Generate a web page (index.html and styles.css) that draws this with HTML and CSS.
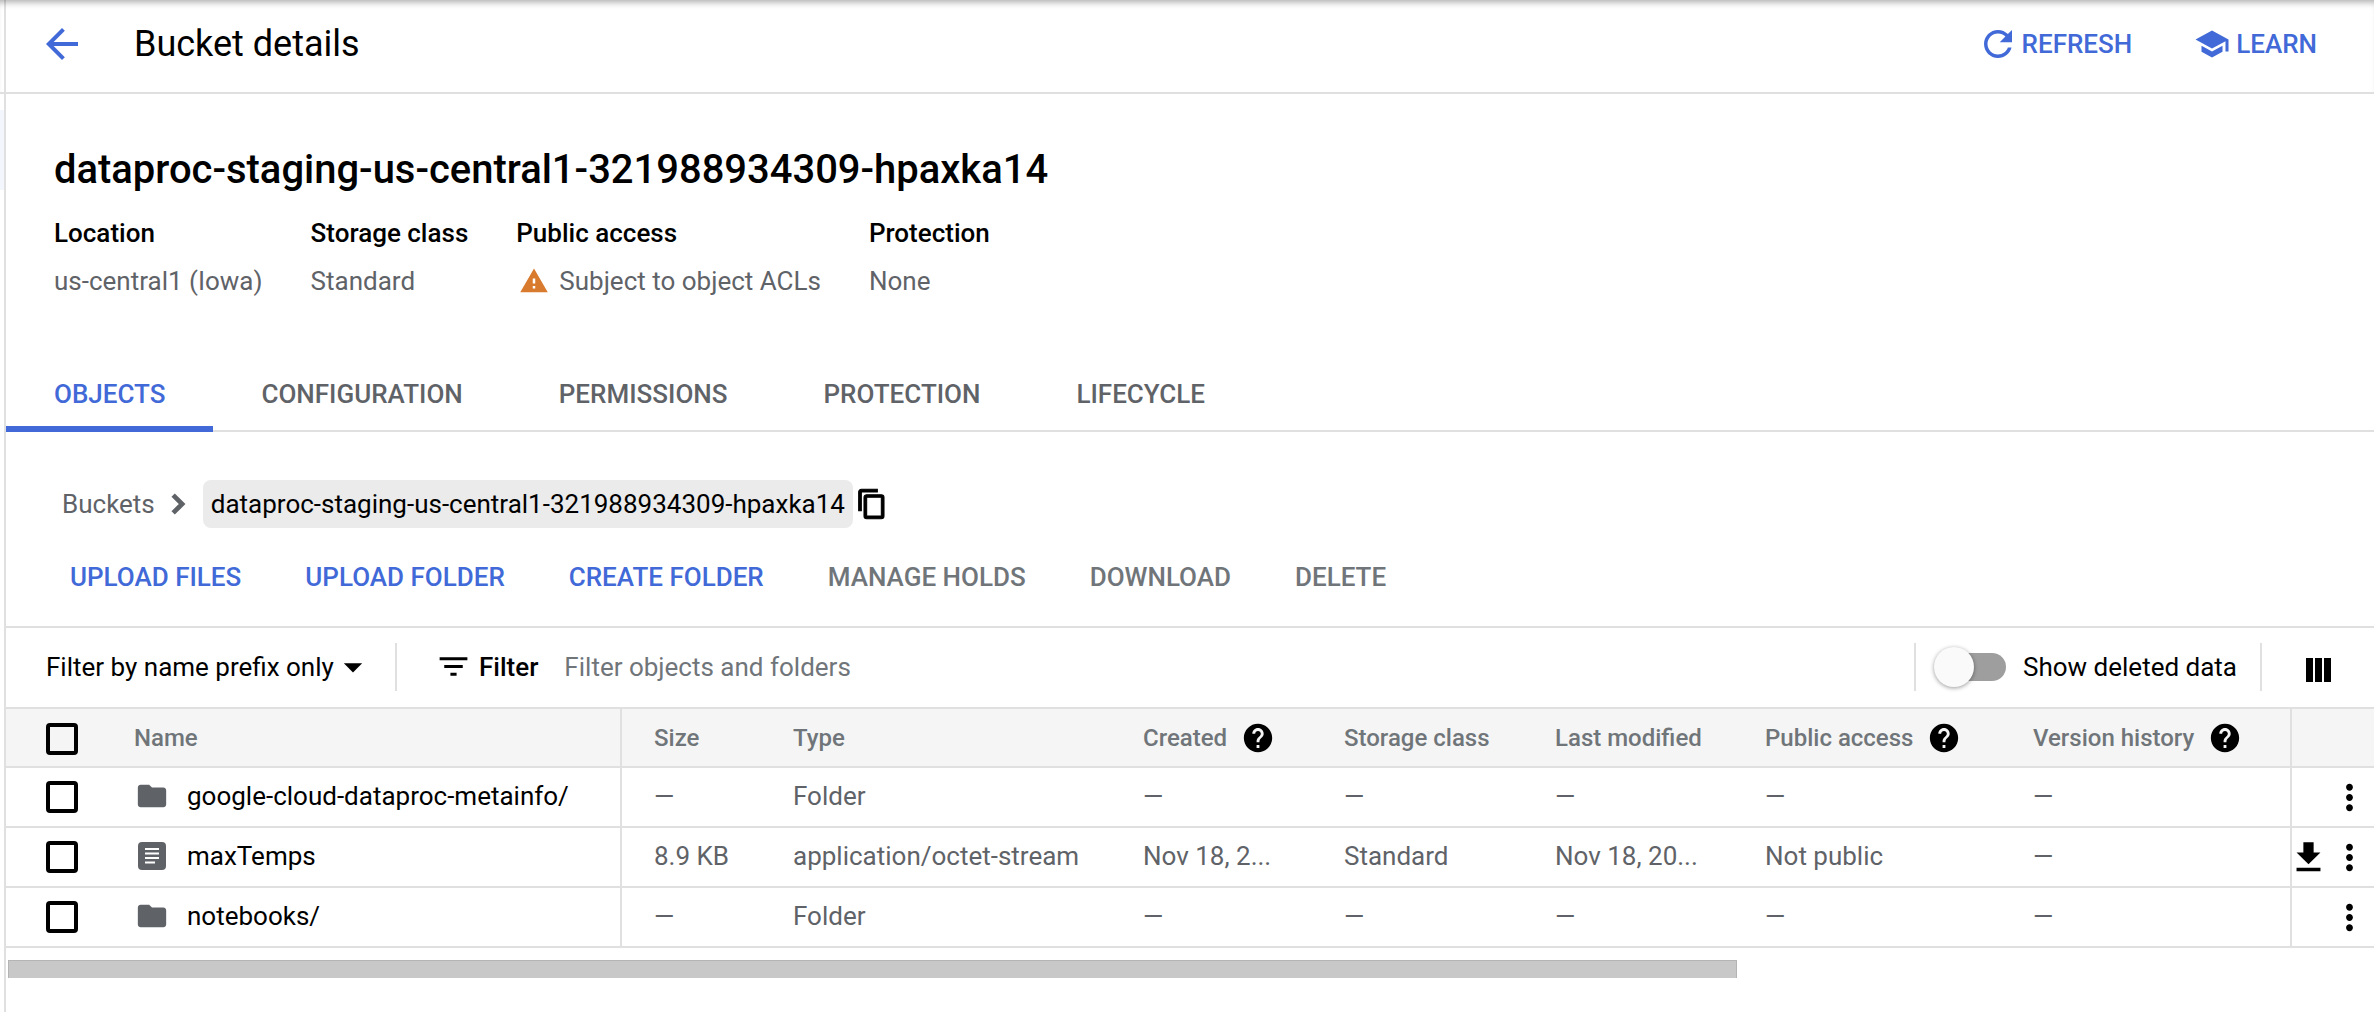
FILE: index.html
```html
<!DOCTYPE html>
<html lang="en">
<head>
<meta charset="utf-8">
<title>Bucket details</title>
<link rel="stylesheet" href="styles.css">
</head>
<body>
<div class="gutter-tint"></div>
<main class="app">
  <header class="topbar">
    <svg class="i back" viewBox="0 0 24 24"><path d="M20 11H7.83l5.59-5.59L12 4l-8 8 8 8 1.41-1.41L7.83 13H20v-2z"/></svg>
    <h2 class="page-title">Bucket details</h2>
    <a class="top-action refresh"><svg class="i" viewBox="0 0 24 24"><path d="M17.65 6.35C16.2 4.9 14.21 4 12 4c-4.42 0-7.99 3.58-7.99 8s3.57 8 7.99 8c3.73 0 6.84-2.55 7.73-6h-2.08c-.82 2.33-3.04 4-5.65 4-3.31 0-6-2.69-6-6s2.69-6 6-6c1.66 0 3.14.69 4.22 1.78L13 11h7V4l-2.35 2.35z"/></svg>REFRESH</a>
    <a class="top-action learn"><svg class="i" viewBox="0 0 24 24"><path d="M5 13.18v4L12 21l7-3.82v-4L12 17l-7-3.82zM12 3L1 9l11 6 9-4.91V17h2V9L12 3z"/></svg>LEARN</a>
  </header>

  <section class="summary">
    <h1 class="bucket-name">dataproc-staging-us-central1-321988934309-hpaxka14</h1>
    <div class="facts">
      <div class="fact"><div class="fact-label">Location</div><div class="fact-value">us-central1 (Iowa)</div></div>
      <div class="fact"><div class="fact-label">Storage class</div><div class="fact-value">Standard</div></div>
      <div class="fact"><div class="fact-label">Public access</div><div class="fact-value"><svg class="i warn" viewBox="0 0 24 24"><path d="M1 21h22L12 2 1 21zm12-3h-2v-2h2v2zm0-4h-2v-4h2v4z"/></svg>Subject to object ACLs</div></div>
      <div class="fact"><div class="fact-label">Protection</div><div class="fact-value">None</div></div>
    </div>
  </section>

  <nav class="tabs">
    <a class="tab active">OBJECTS</a>
    <a class="tab">CONFIGURATION</a>
    <a class="tab">PERMISSIONS</a>
    <a class="tab">PROTECTION</a>
    <a class="tab">LIFECYCLE</a>
  </nav>

  <div class="crumbs">
    <span class="crumb">Buckets</span>
    <svg class="i chevron" viewBox="0 0 24 24"><path d="M10 6L8.59 7.41 13.17 12l-4.58 4.59L10 18l6-6z"/></svg>
    <span class="chip">dataproc-staging-us-central1-321988934309-hpaxka14</span>
    <svg class="i copy" viewBox="0 0 24 24"><path d="M16 1H4c-1.1 0-2 .9-2 2v14h2V3h12V1zm3 4H8c-1.1 0-2 .9-2 2v14c0 1.1.9 2 2 2h11c1.1 0 2-.9 2-2V7c0-1.1-.9-2-2-2zm0 16H8V7h11v14z"/></svg>
  </div>

  <div class="actions">
    <a class="act on">UPLOAD FILES</a>
    <a class="act on">UPLOAD FOLDER</a>
    <a class="act on">CREATE FOLDER</a>
    <a class="act">MANAGE HOLDS</a>
    <a class="act">DOWNLOAD</a>
    <a class="act">DELETE</a>
  </div>

  <div class="filterbar">
    <span class="prefix">Filter by name prefix only</span>
    <svg class="i caret" viewBox="0 0 24 24"><path d="M7 10l5 5 5-5z"/></svg>
    <span class="vr first"></span>
    <svg class="i filter-ic" viewBox="0 0 24 24"><path d="M10 18h4v-2h-4v2zM3 6v2h18V6H3zm3 7h12v-2H6v2z"/></svg>
    <span class="filter-word">Filter</span>
    <span class="placeholder">Filter objects and folders</span>
    <span class="vr second"></span>
    <span class="toggle"><span class="track"></span><span class="knob"></span></span>
    <span class="toggle-label">Show deleted data</span>
    <span class="vr third"></span>
    <svg class="columns-ic" viewBox="0 0 25 24"><rect width="7" height="24"/><rect x="9" width="7" height="24"/><rect x="18" width="7" height="24"/></svg>
  </div>

  <div class="table">
    <div class="row head">
      <div class="cell cb"><span class="check"></span></div>
      <div class="cell name">Name</div>
      <div class="cell">Size</div>
      <div class="cell">Type</div>
      <div class="cell">Created<svg class="i help" viewBox="0 0 24 24"><path d="M12 2C6.48 2 2 6.48 2 12s4.48 10 10 10 10-4.48 10-10S17.52 2 12 2zm1 17h-2v-2h2v2zm2.07-7.75l-.9.92C13.45 12.9 13 13.5 13 15h-2v-.5c0-1.1.45-2.1 1.17-2.83l1.24-1.26c.37-.36.59-.86.59-1.41 0-1.1-.9-2-2-2s-2 .9-2 2H8c0-2.21 1.79-4 4-4s4 1.79 4 4c0 .88-.36 1.68-.93 2.25z"/></svg></div>
      <div class="cell">Storage class</div>
      <div class="cell">Last modified</div>
      <div class="cell">Public access<svg class="i help" viewBox="0 0 24 24"><path d="M12 2C6.48 2 2 6.48 2 12s4.48 10 10 10 10-4.48 10-10S17.52 2 12 2zm1 17h-2v-2h2v2zm2.07-7.75l-.9.92C13.45 12.9 13 13.5 13 15h-2v-.5c0-1.1.45-2.1 1.17-2.83l1.24-1.26c.37-.36.59-.86.59-1.41 0-1.1-.9-2-2-2s-2 .9-2 2H8c0-2.21 1.79-4 4-4s4 1.79 4 4c0 .88-.36 1.68-.93 2.25z"/></svg></div>
      <div class="cell">Version history<svg class="i help" viewBox="0 0 24 24"><path d="M12 2C6.48 2 2 6.48 2 12s4.48 10 10 10 10-4.48 10-10S17.52 2 12 2zm1 17h-2v-2h2v2zm2.07-7.75l-.9.92C13.45 12.9 13 13.5 13 15h-2v-.5c0-1.1.45-2.1 1.17-2.83l1.24-1.26c.37-.36.59-.86.59-1.41 0-1.1-.9-2-2-2s-2 .9-2 2H8c0-2.21 1.79-4 4-4s4 1.79 4 4c0 .88-.36 1.68-.93 2.25z"/></svg></div>
      <div class="cell tools"></div>
    </div>
    <div class="row">
      <div class="cell cb"><span class="check"></span></div>
      <div class="cell name"><svg class="i obj" viewBox="0 0 24 24"><path d="M10 4H4c-1.1 0-1.99.9-1.99 2L2 18c0 1.1.9 2 2 2h16c1.1 0 2-.9 2-2V8c0-1.1-.9-2-2-2h-8l-2-2z"/></svg><span class="obj-name">google-cloud-dataproc-metainfo/</span></div>
      <div class="cell">—</div><div class="cell">Folder</div><div class="cell">—</div><div class="cell">—</div><div class="cell">—</div><div class="cell">—</div><div class="cell">—</div>
      <div class="cell tools"><svg class="i more" viewBox="0 0 24 24"><path d="M12 8c1.1 0 2-.9 2-2s-.9-2-2-2-2 .9-2 2 .9 2 2 2zm0 2c-1.1 0-2 .9-2 2s.9 2 2 2 2-.9 2-2-.9-2-2-2zm0 6c-1.1 0-2 .9-2 2s.9 2 2 2 2-.9 2-2-.9-2-2-2z"/></svg></div>
    </div>
    <div class="row">
      <div class="cell cb"><span class="check"></span></div>
      <div class="cell name"><svg class="doc" viewBox="0 0 28 28"><rect width="28" height="28" rx="4"/><path class="doc-lines" d="M7 7h14M7 11.500h14M7 16h14M7 20.500h10"/></svg><span class="obj-name">maxTemps</span></div>
      <div class="cell">8.9 KB</div><div class="cell">application/octet-stream</div><div class="cell">Nov 18, 2...</div><div class="cell">Standard</div><div class="cell">Nov 18, 20...</div><div class="cell">Not public</div><div class="cell">—</div>
      <div class="cell tools"><svg class="i dl" viewBox="0 0 24 24"><path d="M19 9h-4V3H9v6H5l7 7 7-7zM5 18v2h14v-2H5z"/></svg><svg class="i more" viewBox="0 0 24 24"><path d="M12 8c1.1 0 2-.9 2-2s-.9-2-2-2-2 .9-2 2 .9 2 2 2zm0 2c-1.1 0-2 .9-2 2s.9 2 2 2 2-.9 2-2-.9-2-2-2zm0 6c-1.1 0-2 .9-2 2s.9 2 2 2 2-.9 2-2-.9-2-2-2z"/></svg></div>
    </div>
    <div class="row">
      <div class="cell cb"><span class="check"></span></div>
      <div class="cell name"><svg class="i obj" viewBox="0 0 24 24"><path d="M10 4H4c-1.1 0-1.99.9-1.99 2L2 18c0 1.1.9 2 2 2h16c1.1 0 2-.9 2-2V8c0-1.1-.9-2-2-2h-8l-2-2z"/></svg><span class="obj-name">notebooks/</span></div>
      <div class="cell">—</div><div class="cell">Folder</div><div class="cell">—</div><div class="cell">—</div><div class="cell">—</div><div class="cell">—</div><div class="cell">—</div>
      <div class="cell tools"><svg class="i more" viewBox="0 0 24 24"><path d="M12 8c1.1 0 2-.9 2-2s-.9-2-2-2-2 .9-2 2 .9 2 2 2zm0 2c-1.1 0-2 .9-2 2s.9 2 2 2 2-.9 2-2-.9-2-2-2zm0 6c-1.1 0-2 .9-2 2s.9 2 2 2 2-.9 2-2-.9-2-2-2z"/></svg></div>
    </div>
  </div>
  <div class="hscroll"><div class="thumb"></div></div>
</main>
</body>
</html>
```
FILE: styles.css
```css
* { box-sizing: border-box; }
html, body { margin: 0; height: 100%; overflow: hidden; background: #fff; }
body { font-family: Roboto, "Liberation Sans", sans-serif; color: #000; font-size: 26px; }
.gutter-tint { position: absolute; left: 0; top: 110px; width: 4px; height: 80px; background: #f3f6fc; }
.app { margin-left: 4px; border-left: 2px solid #e0e0e0; height: 1012px; display: flex; flex-direction: column; }
.i { display: block; flex: none; fill: currentColor; }

.topbar { margin-left: -6px; height: 94px; flex: none; display: flex; align-items: center; padding: 0 57px 4px 38px; border-bottom: 2px solid #e0e0e0; box-shadow: inset 0 7px 7px -5px rgba(0,0,0,.35); color: #4169d8; }
.back { width: 48px; height: 48px; }
.page-title { margin: 0 auto 0 48px; font-size: 36px; font-weight: 400; color: #000; }
.top-action { display: flex; align-items: center; font-size: 26px; font-weight: 500; }
.refresh { margin-right: 62px; gap: 3px; }
.refresh .i { width: 42px; height: 42px; }
.learn { gap: 6px; }
.learn .i { width: 36px; height: 36px; }

.summary { height: 184px; flex: none; padding: 52px 0 0 48px; }
.bucket-name { margin: 0; font-size: 39.95px; line-height: 48px; font-weight: 500; }
.facts { display: flex; gap: 48px; margin-top: 23px; }
.fact-label { font-weight: 500; line-height: 32px; font-size: 26px; }
.fact-value { display: flex; align-items: center; margin-top: 16px; line-height: 32px; color: #5f6368; font-size: 26px; }
.warn { width: 30px; height: 30px; margin: 0 10px 0 3px; color: #d97b2e; }

.tabs { height: 154px; flex: none; display: flex; align-items: flex-end; border-bottom: 2px solid #e0e0e0; }
.tab { height: 69px; padding: 0 48px; font-size: 26px; font-weight: 500; color: #5f6368; line-height: 48px; padding-top: 9px; }
.tab.active { color: #4169d8; border-bottom: 6px solid #4169d8; margin-bottom: -2px; height: 71px; }

.crumbs { display: flex; align-items: center; height: 48px; flex: none; margin-top: 48px; padding-left: 56px; }
.crumb { color: #5f6368; }
.chevron { width: 38px; height: 38px; margin-left: 4px; margin-right: 6px; color: #5f6368; stroke: currentColor; stroke-width: 1; }
.chip { display: block; height: 48px; line-height: 48px; padding: 0 8px; border-radius: 8px; background: #ebebeb; }
.copy { width: 32px; height: 32px; margin-left: 3px; stroke: currentColor; stroke-width: .8; }

.actions { display: flex; gap: 64px; flex: none; height: 100px; padding: 25px 0 0 64px; border-bottom: 2px solid #e0e0e0; font-weight: 500; color: #70757a; }
.act { line-height: 48px; }
.act.on { color: #4169d8; }

.filterbar { height: 79px; flex: none; display: flex; align-items: center; padding: 0 0 2px 40px; }
.prefix { width: 291px; }
.caret { width: 44px; height: 44px; margin-left: -6px; }
.vr { width: 2px; height: 48px; background: #e0e0e0; flex: none; }
.vr.first { margin-left: 20px; }
.filter-ic { width: 37px; height: 37px; margin-left: 38px; color: #000; }
.filter-word { font-weight: 500; margin-left: 7px; }
.placeholder { margin-left: 26px; color: #70757a; }
.vr.second { margin-left: auto; }
.toggle { position: relative; width: 72px; height: 40px; margin-left: 18px; flex: none; }
.track { position: absolute; left: 6px; right: 0; top: 6px; height: 28px; border-radius: 14px; background: #9e9e9e; }
.knob { position: absolute; left: 0; top: 0; width: 40px; height: 40px; border-radius: 50%; background: #fafafa; box-shadow: 0 1px 4px rgba(0,0,0,.4); }
.toggle-label { margin-left: 17px; }
.vr.third { margin-left: 23px; }
.columns-ic { width: 25px; height: 24px; flex: none; margin: 6px 43px 0 44px; }

.table { flex: none; }
.row { display: grid; grid-template-columns: 128px 488px 171px 350px 201px 211px 210px 268px 257px 84px; height: 60px; border-bottom: 2px solid #e0e0e0; color: #5f6368; }
.row.head { height: 61px; border-top: 2px solid #e0e0e0; background: #f5f5f5; font-size: 24px; font-weight: 500; color: #70757a; }
.cell { display: flex; align-items: center; min-width: 0; white-space: nowrap; padding-bottom: 3px; }
.row.head .cell, .cell.cb, .cell.tools { padding-bottom: 0; }
.cell.cb { padding-left: 40px; }
.check { display: block; width: 32px; height: 32px; border: 4px solid #000; border-radius: 4px; }
.row.head .check { margin-top: 2px; }
.cell.name { border-right: 2px solid #e0e0e0; }
.cell.name + .cell { padding-left: 32px; }
.cell.tools { border-left: 2px solid #e0e0e0; position: relative; color: #000; justify-content: flex-end; }
.help { width: 34px; height: 34px; margin-left: 14px; color: #000; }
.obj { width: 34px; height: 34px; margin-left: 1px; color: #5f6368; }
.doc { display: block; width: 28px; height: 28px; margin-left: 4px; margin-right: 3px; fill: #5f6368; }
.doc-lines { stroke: #fff; stroke-width: 2; fill: none; }
.obj-name { margin-left: 18px; color: #000; }
.more { width: 41px; height: 41px; margin-right: 4px; }
.dl { width: 41px; height: 41px; position: absolute; left: -4px; top: 9px; }

.hscroll { margin-top: 12px; padding-left: 2px; flex: none; }
.thumb { width: 1729px; height: 18px; background: #c8c8c8; border: 1px solid #b4b4b4; border-bottom: 0; }
```
